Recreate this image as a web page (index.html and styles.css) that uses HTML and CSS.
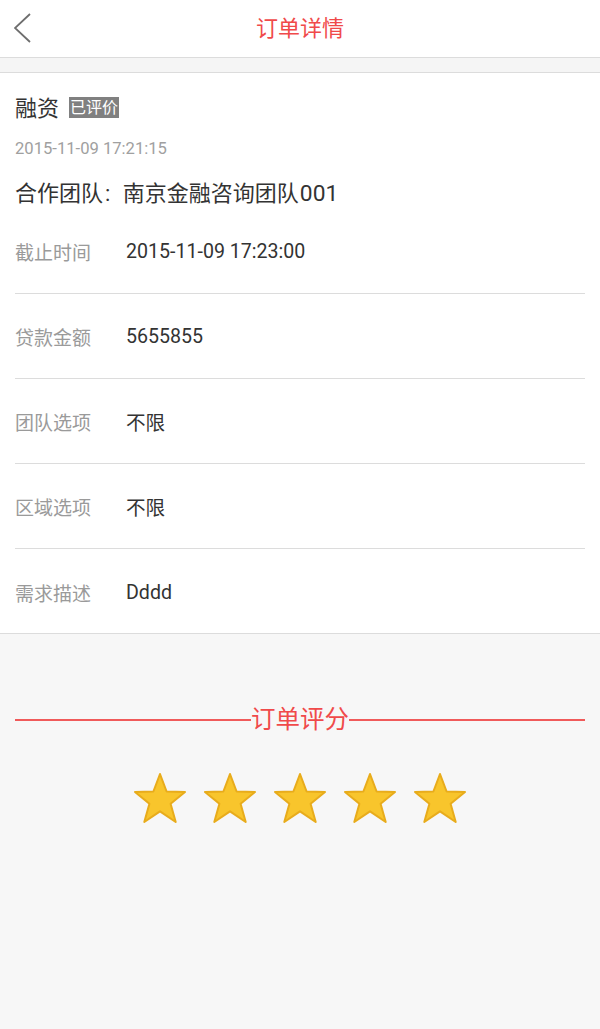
FILE: index.html
```html
<!DOCTYPE html>
<html lang="zh">
<head>
<meta charset="utf-8">
<title>订单详情</title>
<link rel="stylesheet" href="styles.css">
</head>
<body>
<header class="topbar">
  <svg class="back" width="20" height="34" viewBox="0 0 20 34"><polyline points="16,1 1,15 16,29" fill="none" stroke="#6e6e6e" stroke-width="1.8"/></svg>
  <h1 class="title">订单详情</h1>
</header>
<div class="gap"></div>
<section class="card">
  <div class="kind"><span class="kind-name">融资</span><span class="badge">已评价</span></div>
  <div class="stamp">2015-11-09 17:21:15</div>
  <div class="team">合作团队<span class="sep">: </span>南京金融咨询团队<span class="num">001</span></div>
  <div class="row"><span class="label">截止时间</span><span class="value">2015-11-09 17:23:00</span></div>
  <div class="row"><span class="label">贷款金额</span><span class="value">5655855</span></div>
  <div class="row"><span class="label">团队选项</span><span class="value">不限</span></div>
  <div class="row"><span class="label">区域选项</span><span class="value">不限</span></div>
  <div class="row last"><span class="label">需求描述</span><span class="value">Dddd</span></div>
</section>
<section class="rating">
  <div class="rating-title"><span class="line"></span><span class="rt-text">订单评分</span><span class="line"></span></div>
  <div class="stars">
    <svg class="star" viewBox="0 0 54 52"><polygon points="27,2 33.6,19.5 52,20 37.6,31.7 42.7,50 27,39.3 11.3,50 16.4,31.7 2,20 20.4,19.5" fill="#f8c52c" stroke="#e8ac1c" stroke-width="2" stroke-linejoin="round"/></svg>
    <svg class="star" viewBox="0 0 54 52"><polygon points="27,2 33.6,19.5 52,20 37.6,31.7 42.7,50 27,39.3 11.3,50 16.4,31.7 2,20 20.4,19.5" fill="#f8c52c" stroke="#e8ac1c" stroke-width="2" stroke-linejoin="round"/></svg>
    <svg class="star" viewBox="0 0 54 52"><polygon points="27,2 33.6,19.5 52,20 37.6,31.7 42.7,50 27,39.3 11.3,50 16.4,31.7 2,20 20.4,19.5" fill="#f8c52c" stroke="#e8ac1c" stroke-width="2" stroke-linejoin="round"/></svg>
    <svg class="star" viewBox="0 0 54 52"><polygon points="27,2 33.6,19.5 52,20 37.6,31.7 42.7,50 27,39.3 11.3,50 16.4,31.7 2,20 20.4,19.5" fill="#f8c52c" stroke="#e8ac1c" stroke-width="2" stroke-linejoin="round"/></svg>
    <svg class="star" viewBox="0 0 54 52"><polygon points="27,2 33.6,19.5 52,20 37.6,31.7 42.7,50 27,39.3 11.3,50 16.4,31.7 2,20 20.4,19.5" fill="#f8c52c" stroke="#e8ac1c" stroke-width="2" stroke-linejoin="round"/></svg>
  </div>
</section>
</body>
</html>
```
FILE: styles.css
```css
html, body {
  margin: 0;
  padding: 0;
}
body {
  width: 600px;
  min-height: 1029px;
  background: #f7f7f7;
  font-family: Roboto, "Noto Sans CJK SC", sans-serif;
  color: #333;
}
.topbar {
  height: 57px;
  background: #fff;
  border-bottom: 1px solid #dcdcdc;
  display: flex;
  align-items: center;
  justify-content: center;
  position: relative;
}
.back {
  position: absolute;
  left: 14px;
  top: 13px;
}
.title {
  margin: 0;
  font-size: 22px;
  font-weight: normal;
  color: #f04a4a;
  line-height: 30px;
  padding-top: 1px;
}
.gap {
  height: 14px;
  background: #f5f5f5;
}
.card {
  background: #fff;
  border-top: 1px solid #dcdcdc;
  border-bottom: 1px solid #dcdcdc;
  padding: 18px 15px 0;
}
.kind {
  display: flex;
  align-items: center;
  height: 30px;
}
.kind-name {
  font-size: 22px;
  color: #333;
  margin-right: 10px;
}
.badge {
  background: #808080;
  color: #fff;
  font-size: 16px;
  line-height: 21px;
  padding: 0 1px;
  margin-top: 2px;
}
.stamp {
  margin-top: 18px;
  font-size: 16.6px;
  line-height: 20px;
  color: #a0a0a0;
}
.team {
  margin-top: 20px;
  font-size: 22px;
  line-height: 30px;
  color: #333;
}
.sep {
  padding-left: 2px;
  padding-right: 7px;
}
.num {
  font-size: 22.8px;
  padding-left: 1px;
}
.row {
  height: 84px;
  display: flex;
  align-items: center;
  border-bottom: 1px solid #dcdcdc;
  font-size: 19px;
  padding-top: 1px;
  box-sizing: border-box;
  height: 85px;
}
.row.last {
  border-bottom: none;
  height: 84px;
  padding-top: 2px;
}
.label {
  width: 111px;
  color: #9a9a9a;
}
.value {
  color: #333;
  font-size: 19.6px;
}
.rating {
  padding: 71px 15px 0;
}
.rating-title {
  display: flex;
  align-items: center;
  height: 30px;
}
.line {
  flex: 1;
  height: 2px;
  background: #f05a5a;
}
.rt-text {
  font-size: 24.5px;
  color: #f04a4a;
  line-height: 30px;
}
.stars {
  margin-top: 37px;
  display: flex;
  justify-content: center;
  gap: 16px;
}
.star {
  width: 54px;
  height: 52px;
}
```
